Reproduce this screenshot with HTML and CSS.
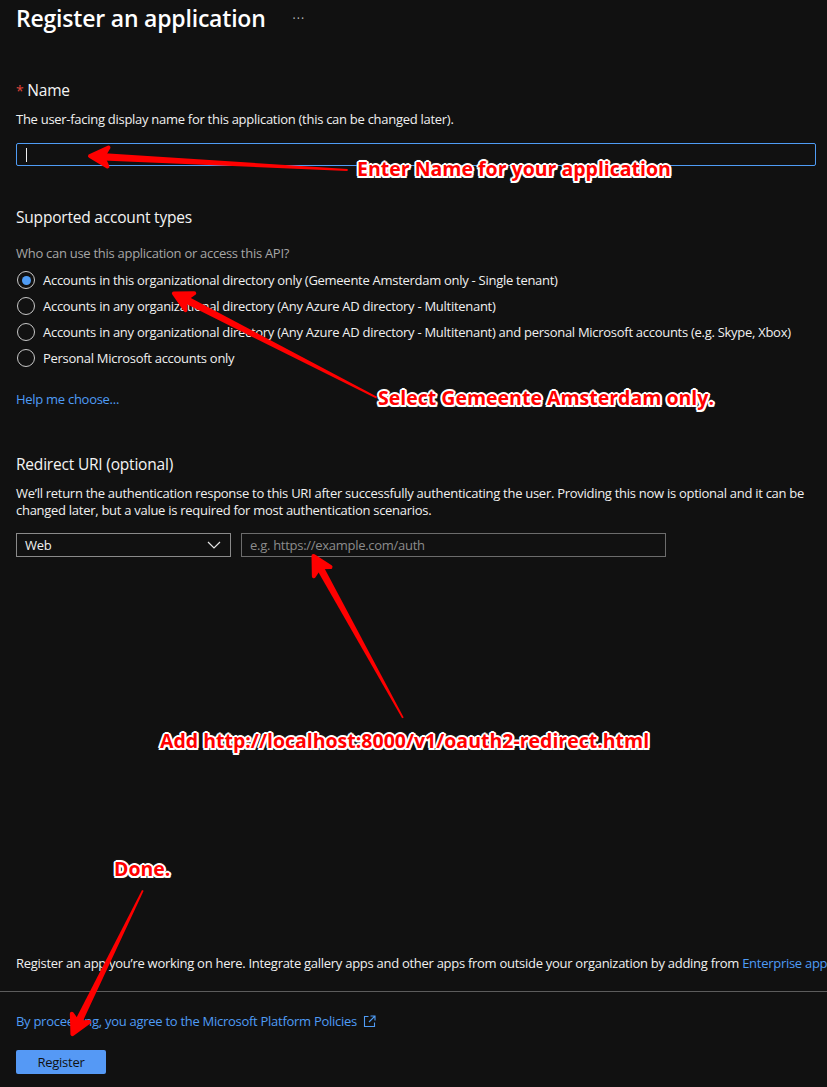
FILE: index.html
```html
<!DOCTYPE html>
<html>
<head>
<meta charset="utf-8">
<link rel="stylesheet" href="styles.css">
</head>
<body>
<div class="page">
  <div class="content">
    <div class="title-row">
      <h1 class="title">Register an application</h1>
      <span class="more">···</span>
    </div>

    <div class="label name-label"><span class="req">*</span> Name</div>
    <p class="help name-help">The user-facing display name for this application (this can be changed later).</p>
    <div class="textbox focused"><span class="caret"></span></div>

    <div class="label section-label">Supported account types</div>
    <p class="help muted who">Who can use this application or access this API?</p>
    <div class="radios">
      <div class="radio-row"><span class="radio checked"></span>Accounts in this organizational directory only (Gemeente Amsterdam only - Single tenant)</div>
      <div class="radio-row"><span class="radio"></span>Accounts in any organizational directory (Any Azure AD directory - Multitenant)</div>
      <div class="radio-row"><span class="radio"></span>Accounts in any organizational directory (Any Azure AD directory - Multitenant) and personal Microsoft accounts (e.g. Skype, Xbox)</div>
      <div class="radio-row"><span class="radio"></span>Personal Microsoft accounts only</div>
    </div>
    <p class="link help-link">Help me choose...</p>

    <div class="label redirect-label">Redirect URI (optional)</div>
    <p class="help redirect-help">We’ll return the authentication response to this URI after successfully authenticating the user. Providing this now is optional and it can be changed later, but a value is required for most authentication scenarios.</p>
    <div class="uri-row">
      <div class="select">
        <span>Web</span>
        <svg class="chev" width="14" height="8" viewBox="0 0 14 8"><path d="M1 1 L7 7 L13 1" fill="none" stroke="#e6e6e6" stroke-width="1.2"/></svg>
      </div>
      <div class="uri-input">e.g. https://example.com/auth</div>
    </div>

    <p class="info">Register an app you’re working on here. Integrate gallery apps and other apps from outside your organization by adding from <span class="link-inline">Enterprise applications</span>.</p>
  </div>
  <div class="divider"></div>
  <div class="content">
    <p class="link policies">By proceeding, you agree to the Microsoft Platform Policies
      <svg class="ext" width="13" height="13" viewBox="0 0 13 13"><path d="M5.5 1.5 H1.5 V11.5 H11.5 V7.5" fill="none" stroke="#4f9cf5" stroke-width="1.1"/><path d="M7.5 1 H12 V5.5 M12 1 L6 7" fill="none" stroke="#4f9cf5" stroke-width="1.1"/></svg>
    </p>
    <button class="btn-register">Register</button>
  </div>

  <svg class="arrows" width="827" height="1087" viewBox="0 0 827 1087">
    <g transform="translate(89 156) rotate(183.1)">
      <polygon class="shaft" points="-259,-0.9 -8,-3.8 -8,3.8 -259,0.9"/>
      <polygon class="head" points="-19,-9.5 -1,0 -19,9.5 -14,0"/>
    </g>
    <g transform="translate(173 293) rotate(207.2)">
      <polygon class="shaft" points="-229,-0.9 -8,-3.8 -8,3.8 -229,0.9"/>
      <polygon class="head" points="-19,-9.5 -1,0 -19,9.5 -14,0"/>
    </g>
    <g transform="translate(313 555) rotate(241.1)">
      <polygon class="shaft" points="-186,-0.9 -8,-3.8 -8,3.8 -186,0.9"/>
      <polygon class="head" points="-19,-9.5 -1,0 -19,9.5 -14,0"/>
    </g>
    <g transform="translate(72 1035) rotate(116.1)">
      <polygon class="shaft" points="-161,-0.9 -8,-3.8 -8,3.8 -161,0.9"/>
      <polygon class="head" points="-19,-9.5 -1,0 -19,9.5 -14,0"/>
    </g>
  </svg>

  <div class="note note-name">Enter Name for your application</div>
  <div class="note note-select">Select Gemeente Amsterdam only.</div>
  <div class="note note-add">Add http://localhost:8000/v1/oauth2-redirect.html</div>
  <div class="note note-done">Done.</div>
</div>
</body>
</html>
```

FILE: styles.css
```css
body {
  margin: 0;
  background: #111111;
  color: #f0f0f0;
  font-family: "Open Sans", "Noto Sans", sans-serif;
  font-size: 13px;
  letter-spacing: -0.28px;
}

.page {
  position: relative;
  width: 827px;
  height: 1087px;
  overflow: hidden;
}

.content {
  padding-left: 16px;
}

p {
  margin: 0;
}

.title-row {
  display: flex;
  align-items: center;
  height: 36px;
}

.title {
  margin: 0;
  font-size: 23px;
  font-weight: 600;
  letter-spacing: -0.2px;
  line-height: 36px;
  color: #ffffff;
}

.more {
  margin-left: 27px;
  font-size: 12px;
  color: #bdbdbd;
  letter-spacing: 1px;
}

.label {
  font-size: 15.5px;
  letter-spacing: -0.2px;
  line-height: 20px;
  color: #f4f4f4;
}

.name-label {
  margin-top: 44px;
}

.req {
  color: #e0453a;
  font-size: 14px;
}

.help {
  line-height: 18px;
}

.muted {
  color: #a6a6a6;
}

.name-help {
  margin-top: 9px;
}

.textbox {
  margin-top: 15px;
  width: 800px;
  height: 23px;
  box-sizing: border-box;
  border: 1px solid #4f9cf5;
  border-radius: 2px;
  display: flex;
  align-items: center;
  padding-left: 9px;
}

.caret {
  width: 1px;
  height: 14px;
  background: #f0f0f0;
}

.section-label {
  margin-top: 41px;
}

.who {
  margin-top: 17px;
}

.radios {
  margin-top: 5px;
  display: flex;
  flex-direction: column;
}

.radio-row {
  height: 26px;
  display: flex;
  align-items: center;
  white-space: nowrap;
}

.radio {
  flex: none;
  width: 18px;
  height: 18px;
  box-sizing: border-box;
  border: 1px solid #c8c8c8;
  border-radius: 50%;
  margin-left: 1px;
  margin-right: 8px;
  display: flex;
  align-items: center;
  justify-content: center;
}

.radio.checked::after {
  content: "";
  width: 9px;
  height: 9px;
  border-radius: 50%;
  background: #4f9cf5;
}

.link {
  color: #4f9cf5;
}

.help-link {
  margin-top: 19px;
  line-height: 18px;
}

.redirect-label {
  margin-top: 46px;
}

.redirect-help {
  margin-top: 11px;
  line-height: 17px;
  width: 800px;
}

.uri-row {
  margin-top: 14px;
  display: flex;
  gap: 10px;
}

.select {
  width: 215px;
  height: 24px;
  box-sizing: border-box;
  border: 1px solid #8a8a8a;
  display: flex;
  align-items: center;
  justify-content: space-between;
  padding: 0 9px 0 8px;
  font-weight: 500;
}

.uri-input {
  width: 425px;
  height: 24px;
  box-sizing: border-box;
  border: 1px solid #6c6c6c;
  display: flex;
  align-items: center;
  padding-left: 8px;
  color: #8c8c8c;
}

.info {
  margin-top: 397px;
  line-height: 18px;
  white-space: nowrap;
}

.link-inline {
  color: #4f9cf5;
}

.divider {
  margin-top: 19px;
  height: 1px;
  background: #5c5c5c;
}

.policies {
  margin-top: 20px;
  line-height: 18px;
  display: flex;
  align-items: center;
  gap: 4px;
}

.ext {
  margin-left: 2px;
}

.btn-register {
  margin-top: 20px;
  width: 90px;
  height: 24px;
  border: none;
  border-radius: 2px;
  background: #5599f5;
  color: #111111;
  font: inherit;
  letter-spacing: inherit;
  padding: 0;
}

.arrows {
  position: absolute;
  left: 0;
  top: 0;
  pointer-events: none;
}

.shaft {
  fill: #ff0000;
}

.head {
  fill: #ff0000;
  stroke: #ff0000;
  stroke-width: 4;
  stroke-linejoin: round;
}

.note {
  position: absolute;
  font-family: "Open Sans", "Noto Sans", sans-serif;
  font-weight: 700;
  font-size: 19.5px;
  letter-spacing: 0;
  line-height: 24px;
  color: #ff0000;
  white-space: nowrap;
  text-shadow:
    -1.5px -1.5px 0 #fff, 1.5px -1.5px 0 #fff, -1.5px 1.5px 0 #fff, 1.5px 1.5px 0 #fff,
    0 -2px 0 #fff, 0 2px 0 #fff, -2px 0 0 #fff, 2px 0 0 #fff,
    0 0 3px #bbb;
}

.note-name {
  left: 357px;
  top: 157px;
}

.note-select {
  left: 378px;
  top: 386px;
}

.note-add {
  left: 160px;
  top: 729px;
}

.note-done {
  left: 114px;
  top: 857px;
}
```
